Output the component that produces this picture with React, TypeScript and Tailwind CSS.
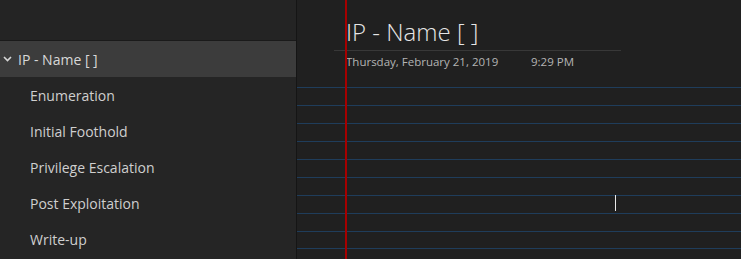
import React from "react";

const SECTIONS = [
  "Enumeration",
  "Initial Foothold",
  "Privilege Escalation",
  "Post Exploitation",
  "Write-up",
];

const RULE_HEIGHTS = [18, 18, 18, 18, 18, 18, 18, 18, 17, 10];

function Chevron() {
  return (
    <svg width="9" height="6" viewBox="0 0 9 6" className="mr-[6px]">
      <path d="M1 1 L4.5 4.5 L8 1" fill="none" stroke="#d6d6d6" strokeWidth="1.6" />
    </svg>
  );
}

function Sidebar() {
  return (
    <div className="w-[297px] shrink-0 bg-[#252525] border-r border-[#151515] flex flex-col">
      <div className="h-[41px] border-b border-[#1a1a1a] bg-[#242424]" />
      <div className="h-[36px] bg-[#3c3c3c] flex items-center pl-[3px] text-[14px] text-[#d8d8d8]">
        <Chevron />
        <span>IP - Name [ ]</span>
      </div>
      {SECTIONS.map((s) => (
        <div key={s} className="h-[36px] flex items-center pl-[30px] pt-px text-[14px] text-[#cfcfcf]">
          {s}
        </div>
      ))}
    </div>
  );
}

function Page() {
  return (
    <div className="relative flex-1 bg-[#202020] overflow-hidden">
      <div className="h-[87px] relative">
        <div className="absolute left-[49px] top-[15px] text-[24px] font-light text-[#e6e6e6] leading-[34px]">
          IP - Name [ ]
        </div>
        <div className="absolute left-[37px] top-[50px] w-[287px] h-px bg-[#383838]" />
        <div className="absolute left-[49px] top-[54px] flex text-[11.5px] text-[#b4b4b4] leading-[16px]">
          <span className="w-[185px]">Thursday, February 21, 2019</span>
          <span>9:29 PM</span>
        </div>
      </div>
      {RULE_HEIGHTS.map((h, i) => (
        <div
          key={i}
          className="border-t border-[#1f3d5b]"
          style={{ height: h }}
        />
      ))}
      <div className="absolute left-[48px] top-0 bottom-0 w-[2px] bg-[#a60000]" />
      <div className="absolute left-[318px] top-[195px] h-[16px] w-px bg-[#e8e8e8]" />
    </div>
  );
}

export default function App() {
  return (
    <div
      className="flex w-[741px] h-[259px] overflow-hidden"
      style={{ fontFamily: '"Open Sans", "Noto Sans", sans-serif' }}
    >
      <Sidebar />
      <Page />
    </div>
  );
}
